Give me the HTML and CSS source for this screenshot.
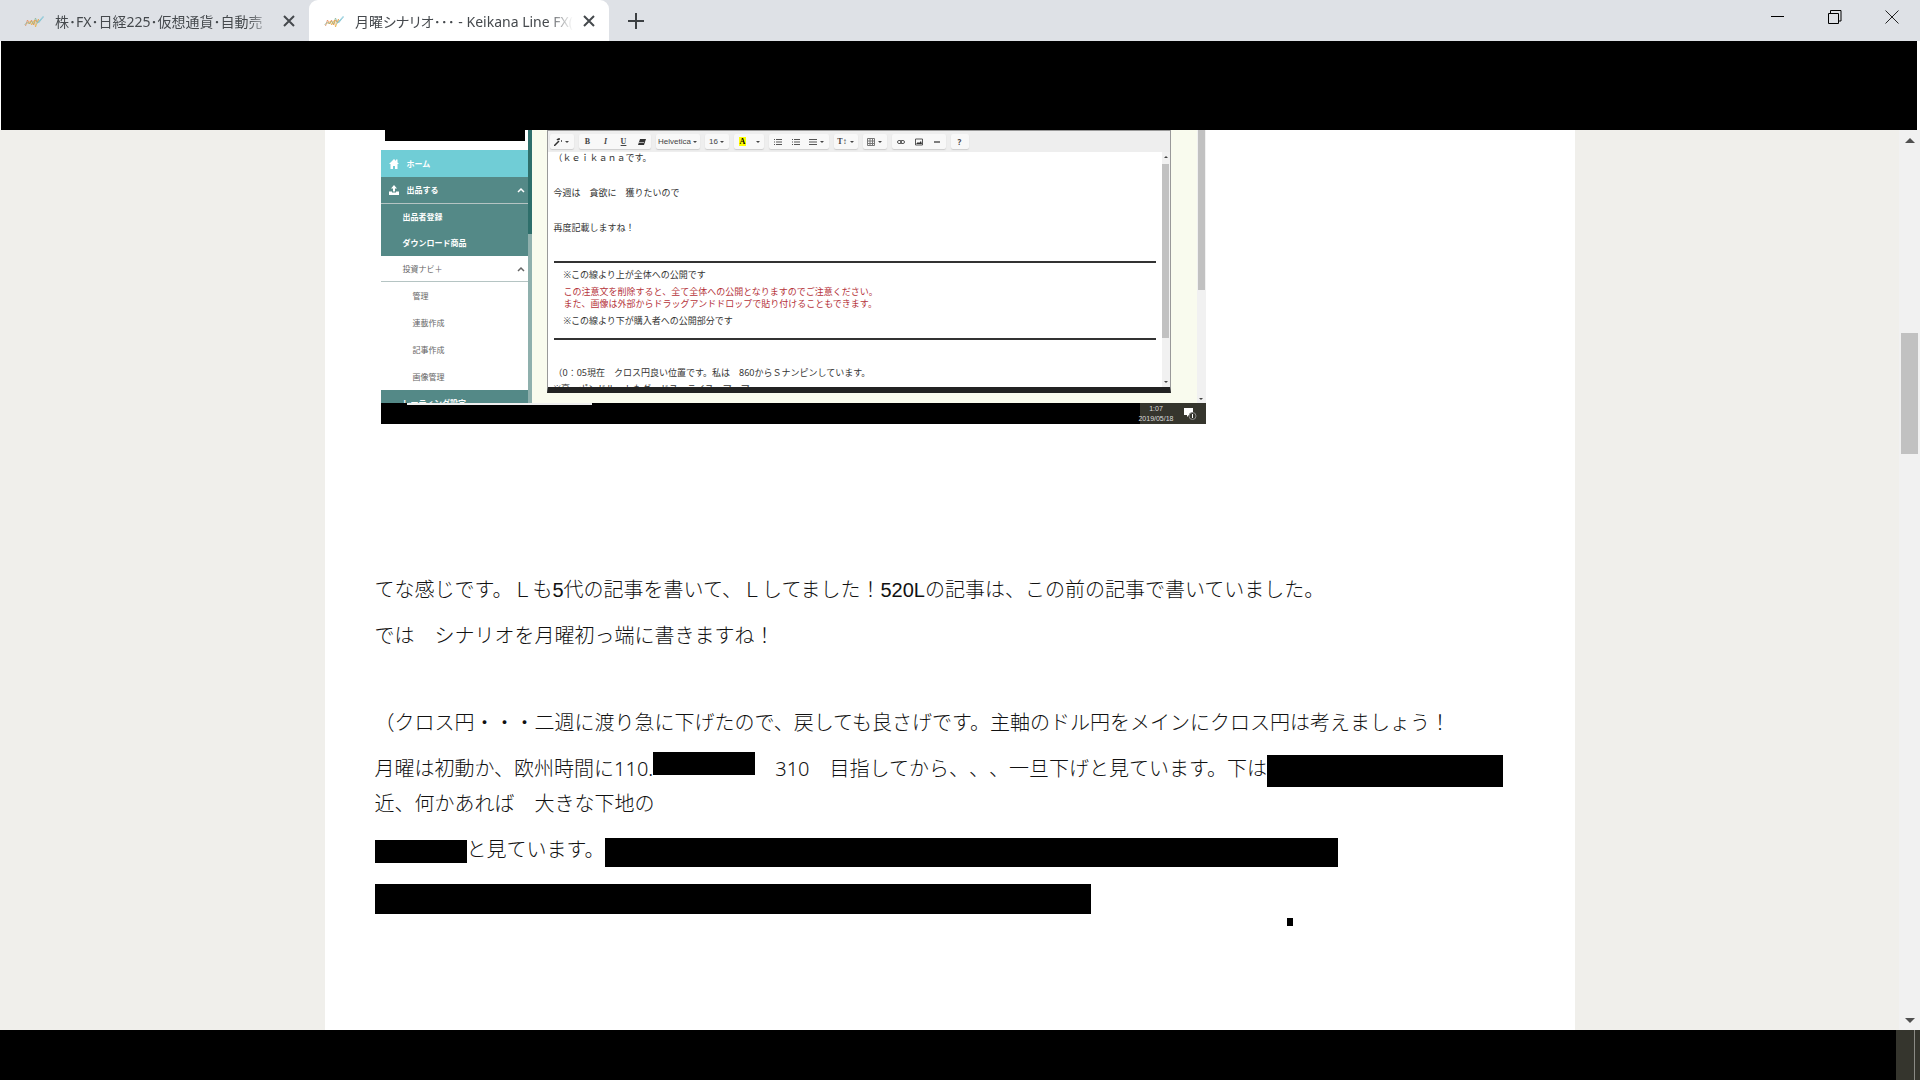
FILE: index.html
```
<!DOCTYPE html>
<html lang="ja">
<head>
    <meta charset="UTF-8">
    <meta name="viewport" content="width=device-width, initial-scale=1.0">
    <title>月曜シナリオ･･･ - Keikana Line FX</title>
    <link rel="stylesheet" href="styles.css">
</head>
<body>

    <!-- Shared icons -->
    <svg class="defs" width="0" height="0">
        <symbol id="logo" viewBox="0 0 20 16">
            <g fill="none" stroke-width="0.8">
                <path d="M1 13l2-6 2 4 2-4 2 5 2-5 2 3 1-4" stroke="#e58a5c"/>
                <path d="M0 12l3-3 2 2 2-3 2 3 2-6 2 5 3-3" stroke="#8fb9a0"/>
                <path d="M3 11l3-3 1 4 3-5 1 7 3-8" stroke="#e8b34a"/>
                <path d="M12 11l7-8M14 10l5-6" stroke="#7fc4d6"/>
            </g>
        </symbol>
        <symbol id="close" viewBox="0 0 12 12">
            <path d="M1 1l10 10M11 1L1 11" fill="none" stroke="#45494d" stroke-width="2"/>
        </symbol>
        <symbol id="chevron" viewBox="0 0 8 6">
            <path d="M1 5l3-3 3 3" fill="none" stroke="currentColor" stroke-width="1.5"/>
        </symbol>
        <symbol id="lines" viewBox="0 0 8 8">
            <path d="M0 1.500h8M0 4h8M0 6.500h8" fill="none" stroke="#555"/>
        </symbol>
        <symbol id="bullets" viewBox="0 0 8 8">
            <path d="M0 1.500h1M2 1.500h6M0 4h1M2 4h6M0 6.500h1M2 6.500h6" fill="none" stroke="#555"/>
        </symbol>
    </svg>

    <header class="tab-bar">
        <div class="tab">
            <svg class="favicon"><use href="#logo"/></svg>
            <span class="tab-title">株･FX･日経225･仮想通貨･自動売</span>
            <button class="tab-close" aria-label="閉じる"><svg><use href="#close"/></svg></button>
        </div>
        <div class="tab active">
            <svg class="favicon"><use href="#logo"/></svg>
            <span class="tab-title">月曜シナリオ･･･ - Keikana Line FX(</span>
            <button class="tab-close" aria-label="閉じる"><svg><use href="#close"/></svg></button>
        </div>
        <button class="new-tab" aria-label="新しいタブ">
            <svg viewBox="0 0 16 16"><path d="M8 0v16M0 8h16" stroke="#3c4043" stroke-width="2"/></svg>
        </button>
        <div class="window-buttons">
            <button aria-label="最小化"><svg viewBox="0 0 14 14"><path d="M0 6.5h13" stroke="#000"/></svg></button>
            <button aria-label="元に戻す"><svg viewBox="0 0 14 14"><path d="M.5 3.500h10v10h-10zM2.500 3.500v-3h10.500v10.500h-2.500" fill="none" stroke="#000"/></svg></button>
            <button aria-label="閉じる"><svg viewBox="0 0 14 14"><path d="M.5.5l13 13M13.500.5l-13 13" stroke="#222"/></svg></button>
        </div>
    </header>
    <div class="address-bar"></div>

    <div class="viewport">
        <main class="article">

            <figure class="shot">
                <div class="shot-page">
                    <nav class="side">
                        <div class="side-mask"></div>
                        <a class="side-item home" href="#">
                            <svg viewBox="0 0 10 10"><path d="M5 0L0 5h1.500v5h2.500v-3h2v3h2.500v-5h1.500L8.500 3.500v-3h-1.500v1.500z" fill="#fff"/></svg>ホーム
                        </a>
                        <a class="side-item teal lined" href="#">
                            <svg viewBox="0 0 10 10"><path d="M5 0L2 3.500h2v3h2v-3h2zM0 6.500h3v1h4v-1h3v3.500H0z" fill="#fff"/></svg>出品する
                            <svg class="chevron"><use href="#chevron"/></svg>
                        </a>
                        <a class="side-item teal sub" href="#">出品者登録</a>
                        <a class="side-item teal sub" href="#">ダウンロード商品</a>
                        <a class="side-item plain sub lined" href="#">投資ナビ＋
                            <svg class="chevron"><use href="#chevron"/></svg>
                        </a>
                        <a class="side-item plain deep" href="#">管理</a>
                        <a class="side-item plain deep" href="#">連載作成</a>
                        <a class="side-item plain deep" href="#">記事作成</a>
                        <a class="side-item plain deep" href="#">画像管理</a>
                        <a class="side-item teal sub" href="#">レーティング設定</a>
                    </nav>
                    <div class="side-scroll"></div>

                    <div class="editor">
                        <div class="editor-tools">
                            <div class="group"><button class="wide" aria-label="スタイル"><svg viewBox="0 0 8 8"><path d="M0 8l5-5M5 0v2M7 3h1M3 1l1 1" stroke="#333" stroke-width="1.500"/></svg><i></i></button></div>
                            <div class="group">
                                <button class="serif">B</button><button class="serif italic">I</button><button class="serif under">U</button><button aria-label="書式クリア"><svg viewBox="0 0 8 8"><path d="M2 1h6l-2 6H0z" fill="#333"/><path d="M1 4.500h5" stroke="#aaa"/></svg></button>
                            </div>
                            <div class="group"><button class="font-name">Helvetica<i></i></button></div>
                            <div class="group"><button class="wide arial">16<i></i></button></div>
                            <div class="group"><button class="serif"><mark>A</mark></button><button class="thin" aria-label="色"><i></i></button></div>
                            <div class="group">
                                <button aria-label="箇条書き"><svg><use href="#bullets"/></svg></button><button aria-label="番号"><svg><use href="#bullets"/></svg></button><button class="wide" aria-label="段落"><svg><use href="#lines"/></svg><i></i></button>
                            </div>
                            <div class="group"><button class="serif wide">T↕<i></i></button></div>
                            <div class="group"><button class="wide" aria-label="表"><svg viewBox="0 0 8 8"><path d="M.5.5h7v7h-7zM3 0v8M5.500 0v8M0 3h8M0 5.500h8" fill="none" stroke="#777"/></svg><i></i></button></div>
                            <div class="group">
                                <button aria-label="リンク"><svg viewBox="0 0 8 8"><rect x=".5" y="2.500" width="4" height="3" rx="1.500" fill="none" stroke="#555"/><rect x="3.500" y="2.500" width="4" height="3" rx="1.500" fill="none" stroke="#555"/></svg></button><button aria-label="画像"><svg viewBox="0 0 8 8"><path d="M.5 1h7v6h-7z" fill="none" stroke="#555"/><path d="M1 6l2-2 1 1 2-2 1 3z" fill="#333"/></svg></button><button aria-label="罫線"><svg viewBox="0 0 8 8"><path d="M1 4h6" stroke="#555" stroke-width="1.500"/></svg></button>
                            </div>
                            <div class="group"><button><b>?</b></button></div>
                        </div>
                        <div class="editor-main">
                            <div class="editor-text">
                                <p>（ｋｅｉｋａｎａです。</p>
                                <p>今週は　貪欲に　獲りたいので</p>
                                <p>再度記載しますね！</p>
                                <div class="notice">
                                    <span>※この線より上が全体への公開です</span>
                                    <span class="red">この注意文を削除すると、全て全体への公開となりますのでご注意ください。<br>また、画像は外部からドラッグアンドドロップで貼り付けることもできます。</span>
                                    <span>※この線より下が購入者への公開部分です</span>
                                </div>
                                <p class="after">（0：05現在　クロス円良い位置です。私は　860からＳナンピンしています。</p>
                                <p>※豪　ポンドルートもダードスーライスーマーマ</p>
                            </div>
                            <div class="mini-scroll"><i class="up"></i><div class="mini-thumb"></div><i></i></div>
                        </div>
                    </div>
                    <div class="page-scroll"><div class="page-thumb"></div><i></i></div>
                </div>
                <div class="shot-taskbar">
                    <div class="clock">1:07<br>2019/05/18</div>
                    <svg viewBox="0 0 14 14"><path d="M1 1h9v7H6l-2 2V8H1z" fill="#fff"/><circle cx="9.500" cy="9" r="3.500" fill="#35352d" stroke="#888"/><path d="M9.500 7v4" stroke="#fff"/></svg>
                </div>
            </figure>

            <p class="arial">てな感じです。Ｌも5代の記事を書いて、Ｌしてました！520Lの記事は、この前の記事で書いていました。</p>
            <p class="spaced">では　シナリオを月曜初っ端に書きますね！</p>
            <p>（クロス円・・・二週に渡り急に下げたので、戻しても良さげです。主軸のドル円をメインにクロス円は考えましょう！</p>
            <p>月曜は初動か、欧州時間に110.<span class="mask price"></span>　310　目指してから、、、一旦下げと見ています。下は<span class="mask target"></span><br>近、何かあれば　大きな下地の</p>
            <p class="last"><span class="mask word"></span>と見ています。<span class="mask sentence"></span></p>
            <div class="mask line"></div>
            <div class="mask dot"></div>
        </main>

        <div class="scrollbar">
            <i class="arrow up"></i>
            <div class="thumb"></div>
            <i class="arrow"></i>
        </div>
    </div>

    <footer class="taskbar"><div class="show-desktop"></div></footer>

</body>
</html>
```
FILE: styles.css
```
* {
    box-sizing: border-box;
}
body {
    margin: 0;
    height: 100vh;
    display: flex;
    flex-direction: column;
    overflow: hidden;
    background: #fff;
    color: #333;
    font-family: "Noto Sans", "Noto Sans CJK JP", sans-serif;
    text-spacing-trim: space-all;
}
button {
    padding: 0;
    border: none;
    background: none;
    font-family: inherit;
    color: inherit;
}
a {
    color: inherit;
    text-decoration: none;
}
p {
    margin: 0;
}
.defs {
    position: absolute;
}

/* Browser tabs */
.tab-bar {
    display: flex;
    flex: none;
    height: 41px;
    padding-left: 9px;
    background: #dee1e6;
}
.tab {
    display: flex;
    align-items: center;
    width: 300px;
    padding: 0 14px 0 15px;
    border-radius: 9px 9px 0 0;
}
.tab.active {
    background: #fff;
}
.favicon {
    width: 21px;
    height: 16px;
    margin-right: 10px;
    flex: none;
}
.tab-title {
    flex: 1;
    overflow: hidden;
    white-space: nowrap;
    font-size: 14px;
    font-feature-settings: "palt";
    color: #45494d;
    -webkit-mask-image: linear-gradient(to right, #000 88%, transparent);
    mask-image: linear-gradient(to right, #000 88%, transparent);
}
.tab-close {
    width: 12px;
    height: 12px;
    margin-left: 10px;
}
.tab-close svg {
    display: block;
    width: 12px;
    height: 12px;
}
.new-tab {
    width: 16px;
    margin-left: 19px;
}
.new-tab svg {
    display: block;
    width: 16px;
    height: 16px;
}
.window-buttons {
    display: flex;
    margin-left: auto;
}
.window-buttons button {
    width: 57px;
    height: 38px;
}
.window-buttons svg {
    width: 14px;
    height: 14px;
}
.address-bar {
    flex: none;
    height: 89px;
    margin: 0 3px 0 1px;
    background: #000;
}

/* Page */
.viewport {
    display: flex;
    flex: 1;
    min-height: 0;
    background: #f0efeb;
}
.article {
    width: 66%;
    max-width: 1250px;
    margin: 0 auto;
    padding: 0 50px;
    overflow: hidden;
    background: #fff;
    color: #111;
    font-size: 20px;
    font-weight: 300;
    line-height: 34px;
    white-space: nowrap;
}
.article > p {
    margin-bottom: 12px;
}
.article > .arial {
    font-family: "Liberation Sans", "Noto Sans CJK JP", sans-serif;
}
.article > .spaced {
    margin-bottom: 53px;
}
.article > .last {
    margin-bottom: 17px;
}
.mask {
    display: inline-block;
    vertical-align: middle;
    height: 23px;
    background: #000;
}
.price {
    width: 102px;
    vertical-align: top;
}
.target {
    width: 236px;
    height: 32px;
}
.word {
    width: 92px;
}
.sentence {
    width: 733px;
    height: 29px;
    vertical-align: bottom;
}
.line {
    display: block;
    width: 716px;
    height: 30px;
}
.dot {
    display: block;
    width: 6px;
    height: 8px;
    margin: 4px 0 0 912px;
}
.scrollbar {
    display: flex;
    flex-direction: column;
    align-items: center;
    width: 21px;
    padding: 8px 0 7px;
    background: #f1f1f1;
}
.arrow {
    border: 5px solid transparent;
    border-top-color: #505050;
    border-bottom: none;
}
.arrow.up {
    border-top: none;
    border-bottom: 5px solid #505050;
}
.thumb {
    width: 17px;
    height: 121px;
    margin: 190px 0 auto;
    background: #c1c1c1;
}
.taskbar {
    display: flex;
    justify-content: flex-end;
    flex: none;
    height: 50px;
    background: #000;
}
.show-desktop {
    width: 24px;
    background: #35352d;
    border-right: 5px solid #35352d;
    box-shadow: inset -1px 0 #8a8a84;
}

/* Screenshot inside the article */
.shot {
    width: 825px;
    margin: 0 0 149px 6px;
    color: #333;
    font-size: 9px;
    font-weight: 400;
    line-height: 12px;
}
.shot-page {
    display: flex;
    height: 273px;
    overflow: hidden;
    background: #f9fbee;
}
.side {
    display: flex;
    flex-direction: column;
    width: 147px;
    background: #fff;
    font-size: 8px;
}
.side-mask {
    flex: none;
    height: 11px;
    margin: 0 3px 9px 4px;
    background: #000;
}
.side-item {
    display: flex;
    align-items: center;
    flex: none;
    height: 27px;
    padding: 0 3px 0 8px;
    font-weight: bold;
}
.side-item svg {
    width: 10px;
    height: 10px;
    margin-right: 8px;
}
.side-item .chevron {
    width: 8px;
    height: 6px;
    margin: 0 0 0 auto;
}
.home {
    background: #70cdd6;
    color: #fff;
}
.teal {
    background: #548987;
    color: #fff;
}
.plain {
    color: #666;
    font-weight: normal;
}
.lined {
    border-bottom: 1px solid #b5c4c3;
}
.sub {
    height: 26px;
    padding-left: 22px;
}
.deep {
    padding-left: 32px;
}
.side-scroll {
    width: 4px;
    margin-right: 15px;
    background: linear-gradient(#2e6f6b 104px, #8fb0ad 104px);
}
.editor {
    width: 624px;
    height: 263px;
    border: 1px solid #999;
    border-bottom: 6px solid #222;
    background: #fff;
}
.editor-tools {
    display: flex;
    align-items: center;
    gap: 5px;
    height: 21px;
    padding-left: 2px;
    background: #eee;
}
.group {
    display: flex;
    border-radius: 2px;
    background: #f8f8f8;
    box-shadow: 0 1px 1px #ccc;
}
.group button {
    display: flex;
    align-items: center;
    justify-content: center;
    gap: 3px;
    width: 18px;
    height: 15px;
    font-size: 8px;
    color: #444;
}
.group svg {
    width: 8px;
    height: 8px;
}
.group i,
.mini-scroll i,
.page-scroll i {
    border: 2px solid transparent;
    border-top-color: #444;
    border-bottom: none;
}
.group .serif {
    font-family: "Liberation Serif", serif;
    font-weight: bold;
}
.group .italic {
    font-style: italic;
}
.group .under {
    text-decoration: underline;
}
.group .wide {
    width: 24px;
}
.group .thin {
    width: 12px;
}
.group .font-name,
.group .arial {
    font-family: "Liberation Sans", sans-serif;
    gap: 2px;
}
.group .font-name {
    width: 44px;
}
mark {
    padding: 0 1px;
    background: #ff0;
}
.editor-main {
    display: flex;
    height: 235px;
    overflow: hidden;
}
.editor-text {
    flex: 1;
    padding: 0 6px;
}
.editor-text p {
    margin-bottom: 23px;
}
.notice {
    display: flex;
    flex-direction: column;
    gap: 5px;
    height: 79px;
    margin-top: 27px;
    padding: 6px 10px;
    border-top: 2px solid #333;
    border-bottom: 2px solid #333;
}
.red {
    color: #b5333a;
}
.editor-text .after {
    margin: 27px 0 4px;
}
.mini-scroll {
    display: flex;
    flex-direction: column;
    align-items: center;
    justify-content: space-between;
    width: 8px;
    padding: 4px 0;
    background: #f1f1f1;
}
.mini-scroll .up {
    border-top: none;
    border-bottom: 2px solid #444;
}
.mini-thumb {
    width: 7px;
    height: 174px;
    margin: 6px 0 auto;
    background: #c1c1c1;
}
.page-scroll {
    display: flex;
    flex-direction: column;
    align-items: center;
    justify-content: space-between;
    width: 9px;
    margin-left: auto;
    padding-bottom: 3px;
    background: #f1f1f1;
}
.page-thumb {
    width: 7px;
    height: 160px;
    background: #c1c1c1;
}
.shot-taskbar {
    display: flex;
    align-items: center;
    justify-content: flex-end;
    height: 21px;
    background:
        linear-gradient(#eee, #eee) 26px 0 / 185px 2px no-repeat,
        linear-gradient(to left, #35352d 66px, #000 66px);
    color: #ddd;
}
.clock {
    font-family: "Liberation Sans", sans-serif;
    font-size: 7px;
    line-height: 10px;
    text-align: center;
}
.shot-taskbar svg {
    width: 14px;
    height: 14px;
    margin: 0 9px;
}
```
